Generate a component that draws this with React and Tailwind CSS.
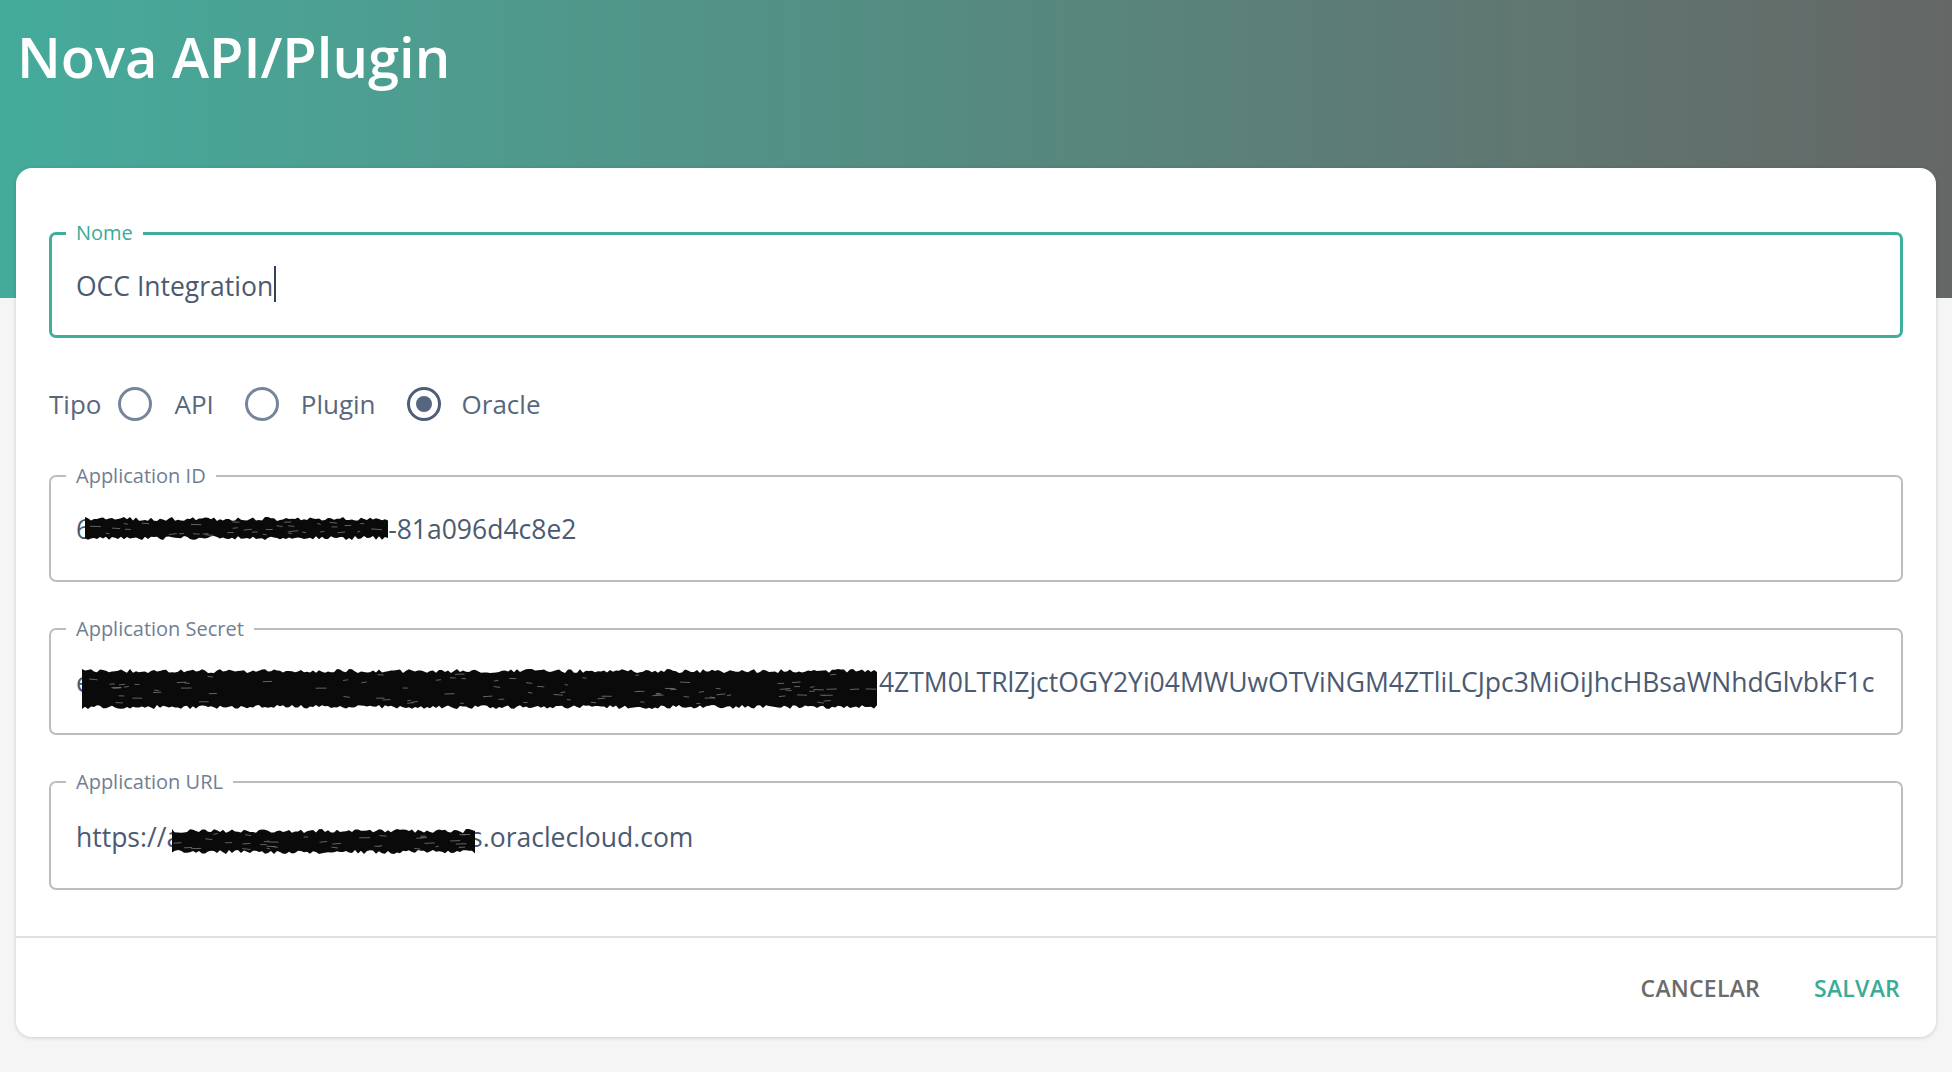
import * as React from "react";

// rough black redaction blot, drawn like a marker scribble
const Scribble = ({ w, h, seed = 7, className = "" }) => {
  let s = seed;
  const rnd = () => {
    s = (s * 16807) % 2147483647;
    return s / 2147483647;
  };
  const top = [];
  const bot = [];
  for (let x = 0; x <= w; x += 3) {
    top.push(`${x} ${(rnd() * 4).toFixed(1)}`);
    bot.push(`${x} ${(h - rnd() * 4).toFixed(1)}`);
  }
  const d = `M${top.join(" L")} L${bot.reverse().join(" L")}Z`;
  const streaks = [];
  for (let i = 0; i < w / 9; i++) {
    const x = rnd() * (w - 12);
    const y = 5 + rnd() * (h - 10);
    streaks.push(
      <path
        key={i}
        d={`M${x.toFixed(1)} ${y.toFixed(1)} l${(3 + rnd() * 8).toFixed(1)} ${(rnd() * 2 - 1).toFixed(1)}`}
        stroke="#7a7a7a"
        strokeWidth="0.8"
      />,
    );
  }
  return (
    <svg width={w} height={h} viewBox={`0 0 ${w} ${h}`} className={`inline-block ${className}`}>
      <path d={d} fill="#0a0a0a" />
      {streaks}
    </svg>
  );
};

const Radio = ({ checked }) =>
  checked ? (
    <span className="flex h-[34px] w-[34px] items-center justify-center rounded-full border-[3px] border-[#4e5e76]">
      <span className="block h-[16px] w-[16px] rounded-full bg-[#55667e]" />
    </span>
  ) : (
    <span className="block h-[34px] w-[34px] rounded-full border-[3px] border-[#76859a]" />
  );

// outlined field with notched label (fieldset + legend)
const Field = ({ label, focused, tall, children }) => (
  <fieldset
    className={
      focused
        ? "min-w-0 rounded-[7px] border-[3px] border-[#3fae9b] pl-[14px] pr-[14px]"
        : "min-w-0 rounded-[7px] border-2 border-[#bdbdbd] pl-[15px] pr-[15px]"
    }
  >
    <legend
      className={
        focused
          ? "px-[10px] text-[20px] leading-[26px] text-[#3aab97]"
          : "px-[10px] text-[20px] leading-[26px] text-[#717e92]"
      }
    >
      {label}
    </legend>
    <div
      className={
        focused
          ? "mt-[20px] mb-[31px] ml-[10px] mr-[6px] h-[38px] overflow-x-clip whitespace-nowrap text-[26.5px] leading-[38px] text-[#4b5a71]"
          : tall
            ? "mt-[23px] mb-[32px] ml-[10px] mr-[6px] h-[38px] overflow-x-clip whitespace-nowrap text-[26.5px] leading-[38px] text-[#4b5a71]"
            : "mt-[21px] mb-[32px] ml-[10px] mr-[6px] h-[38px] overflow-x-clip whitespace-nowrap text-[26.5px] leading-[38px] text-[#4b5a71]"
      }
    >
      {children}
    </div>
  </fieldset>
);

export default function App() {
  return (
    <div className="min-h-screen bg-[#f5f5f5] font-['Open_Sans','Noto_Sans',sans-serif]">
      {/* Header band */}
      <div className="h-[298px] bg-linear-to-r from-[#44ab9b] via-[#558a80] to-[#646766] px-[17px] pt-[17px]">
        <h1 className="text-[56px] font-semibold leading-[78px] text-white">Nova API/Plugin</h1>
      </div>

      {/* Card */}
      <div className="mx-[16px] -mt-[130px] rounded-[16px] bg-white shadow-[0_1px_4px_rgba(0,0,0,0.16)]">
        <div className="px-[33px] pt-[52px]">
          <Field label="Nome" focused>
            OCC Integration
            <span className="ml-[1px] inline-block h-[36px] w-[2px] bg-[#34425a] align-[-6px]" />
          </Field>

          <div className="mt-[46px] mb-[39px] flex h-[40px] items-center text-[26px] leading-[38px] text-[#59677c]">
            <span>Tipo</span>
            <span className="ml-[17px]">
              <Radio />
            </span>
            <span className="ml-[22px]">API</span>
            <span className="ml-[31px]">
              <Radio />
            </span>
            <span className="ml-[22px]">Plugin</span>
            <span className="ml-[31px]">
              <Radio checked />
            </span>
            <span className="ml-[21px]">Oracle</span>
          </div>

          <div className="flex flex-col gap-[34px]">
            <Field label="Application ID">
              6
              <Scribble w={303} h={23} seed={11} className="relative -ml-[6px] align-[-1px]" />
              -81a096d4c8e2
            </Field>
            <Field label="Application Secret">
              e
              <Scribble w={797} h={40} seed={23} className="relative -ml-[9px] align-[-17px]" />
              4ZTM0LTRlZjctOGY2Yi04MWUwOTViNGM4ZTliLCJpc3MiOiJhcHBsaWNhdGlvbkF1c
            </Field>
            <Field label="Application URL" tall>
              https://a
              <Scribble w={304} h={25} seed={41} className="relative -ml-[9px] -mr-[6px] align-[-7px]" />
              s.oraclecloud.com
            </Field>
          </div>
        </div>

        <div className="mt-[46px] h-[2px] bg-[#dde1e5]" />

        <div className="flex h-[99px] items-center justify-end gap-[54px] pr-[36px] text-[23px] font-semibold leading-[28px] tracking-[0.01em]">
          <button className="text-[#6b6b6b]">CANCELAR</button>
          <button className="text-[#3aab98]">SALVAR</button>
        </div>
      </div>
    </div>
  );
}
